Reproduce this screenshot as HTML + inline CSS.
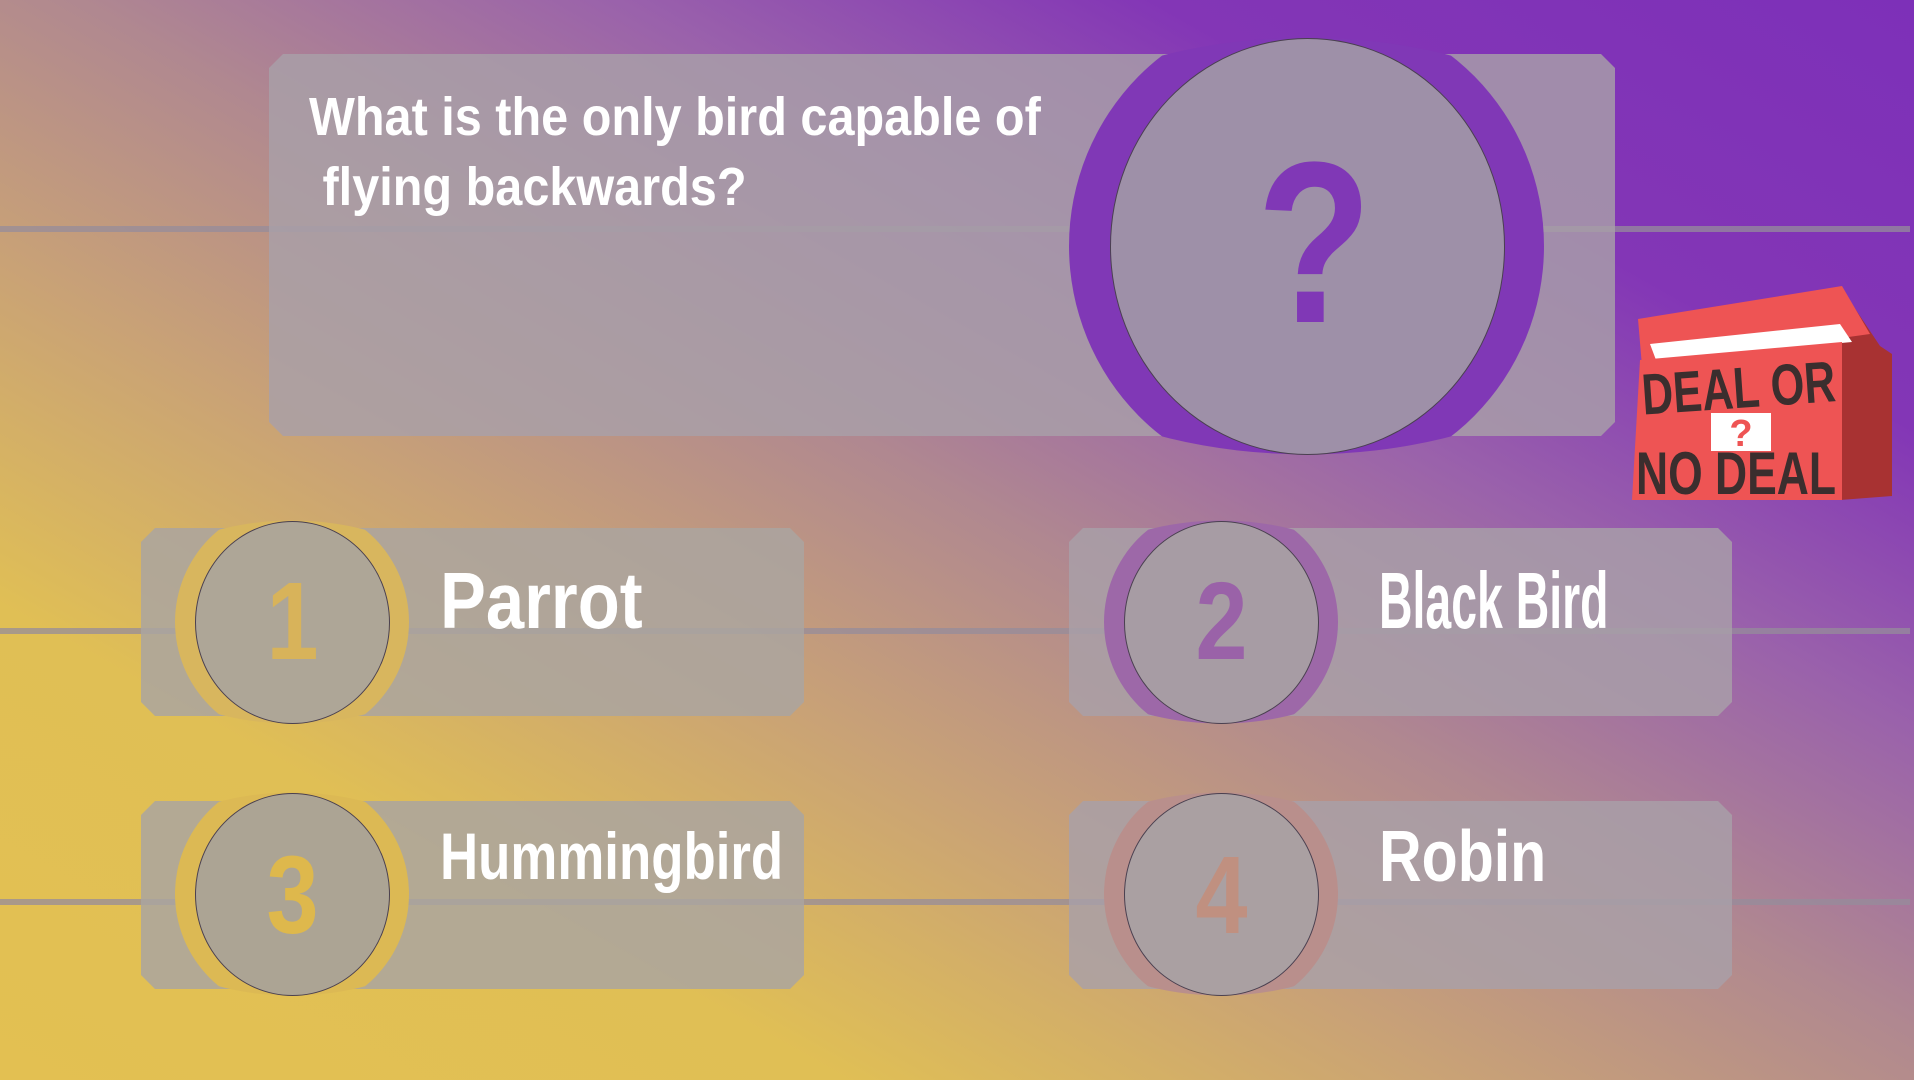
<!DOCTYPE html>
<html><head><meta charset="utf-8"><style>
html,body{margin:0;padding:0}
body{width:1920px;height:1080px;overflow:hidden;position:relative;
background:linear-gradient(to top right,#e3c052 0%,#e0bf55 22%,#c9a276 38%,#b08890 52%,#9a62ab 66%,#8336b6 80%,#7d30b8 100%);
font-family:"Liberation Sans",sans-serif;}
.line{position:absolute;left:0;width:1910px;height:6px;background:rgba(150,140,155,0.75)}
.panel{position:absolute;background:rgba(168,160,168,0.82);clip-path:polygon(14px 0,calc(100% - 14px) 0,100% 14px,100% calc(100% - 14px),calc(100% - 14px) 100%,14px 100%,0 calc(100% - 14px),0 14px)}
.ring{position:absolute;border-radius:50%;clip-path:ellipse(75% 43% at 50% 50%)}
.inner{position:absolute;border-radius:50%;background:#aaa2a6;border:1.5px solid #4a4050;box-sizing:border-box}
.num{position:absolute;font-weight:bold;font-size:110px;text-align:center;line-height:1;transform:scaleX(0.85)}
.ans{position:absolute;color:#fff;font-weight:bold;font-size:80px;transform-origin:0 0;white-space:nowrap}
.q{position:absolute;left:309px;top:82px;color:#fff;font-weight:bold;font-size:54px;line-height:70px;transform:scaleX(0.9);transform-origin:0 0;white-space:nowrap}
</style></head><body>
<div class="line" style="top:226px"></div>
<div class="line" style="top:628px"></div>
<div class="line" style="top:899px"></div>

<div class="panel" style="left:269px;top:54px;width:1346px;height:382px"></div>
<div class="ring" style="left:1069px;top:6px;width:475px;height:480px;background:#8038b6;clip-path:ellipse(75% 43.4% at 50% 50%)"></div>
<div class="inner" style="left:1110px;top:38px;width:395px;height:417px;background:#9e90a8"></div>
<div style="position:absolute;left:1245px;top:128px;width:130px;font-size:230px;font-weight:bold;color:#8038b6;line-height:1;text-align:center;transform:scaleX(0.82)">?</div>
<div class="q">What is the only bird capable of<br>&nbsp;flying backwards?</div>

<div class="panel" style="left:141px;top:528px;width:663px;height:188px;background:rgba(170,165,160,0.85)"></div>
<div class="panel" style="left:1069px;top:528px;width:663px;height:188px"></div>
<div class="panel" style="left:141px;top:801px;width:663px;height:188px;background:rgba(170,165,160,0.85)"></div>
<div class="panel" style="left:1069px;top:801px;width:663px;height:188px"></div>

<div class="ring" style="left:175px;top:504px;width:234px;height:236px;background:#d8b65e"></div>
<div class="inner" style="left:195px;top:521px;width:195px;height:203px;background:#aea697"></div>
<div class="num" style="left:195px;top:567px;width:195px;color:#d8b35a">1</div>

<div class="ring" style="left:1104px;top:504px;width:234px;height:236px;background:#9d68a8"></div>
<div class="inner" style="left:1124px;top:521px;width:195px;height:203px;background:#a79ca4"></div>
<div class="num" style="left:1124px;top:567px;width:195px;color:#9a62a8">2</div>

<div class="ring" style="left:175px;top:776px;width:234px;height:236px;background:#dcb954"></div>
<div class="inner" style="left:195px;top:793px;width:195px;height:203px;background:#aca494"></div>
<div class="num" style="left:195px;top:841px;width:195px;color:#deb84c">3</div>

<div class="ring" style="left:1104px;top:776px;width:234px;height:236px;background:#b98f8c"></div>
<div class="inner" style="left:1124px;top:793px;width:195px;height:203px;background:#aaa0a2"></div>
<div class="num" style="left:1124px;top:841px;width:195px;color:#c09080">4</div>

<div class="ans" style="left:440px;top:555px;transform:scaleX(0.86)">Parrot</div>
<div class="ans" style="left:1379px;top:555px;transform:scaleX(0.58)">Black Bird</div>
<div class="ans" style="left:440px;top:818px;font-size:66px;transform:scaleX(0.8)">Hummingbird</div>
<div class="ans" style="left:1379px;top:816px;font-size:72px;transform:scaleX(0.82)">Robin</div>

<svg style="position:absolute;left:1630px;top:284px" width="265" height="222" viewBox="0 0 265 222">
<polygon points="210,2 250,62 262,70 262,212 210,216" fill="#a83232"/>
<polygon points="8,35 212,2 240,50 12,82" fill="#ee5454"/>
<polygon points="20,60 210,40 222,58 26,76" fill="#fff"/>
<polygon points="10,76 212,58 212,216 2,216" fill="#ee5454"/>
<text x="12" y="124" textLength="194" lengthAdjust="spacingAndGlyphs" font-family="Liberation Sans,sans-serif" font-weight="bold" font-size="58" fill="#3b2e2e" transform="rotate(-4 108 110)">DEAL OR</text>
<rect x="80" y="128" width="62" height="40" fill="#fff" stroke="#ee5454" stroke-width="2"/>
<text x="111" y="162" text-anchor="middle" font-family="Liberation Sans,sans-serif" font-weight="bold" font-size="38" fill="#ee5454">?</text>
<text x="6" y="210" textLength="200" lengthAdjust="spacingAndGlyphs" font-family="Liberation Sans,sans-serif" font-weight="bold" font-size="60" fill="#3b2e2e">NO DEAL</text>
</svg>
<div style="position:absolute;left:1914px;top:0;width:6px;height:1080px;background:#fff"></div>
</body></html>
